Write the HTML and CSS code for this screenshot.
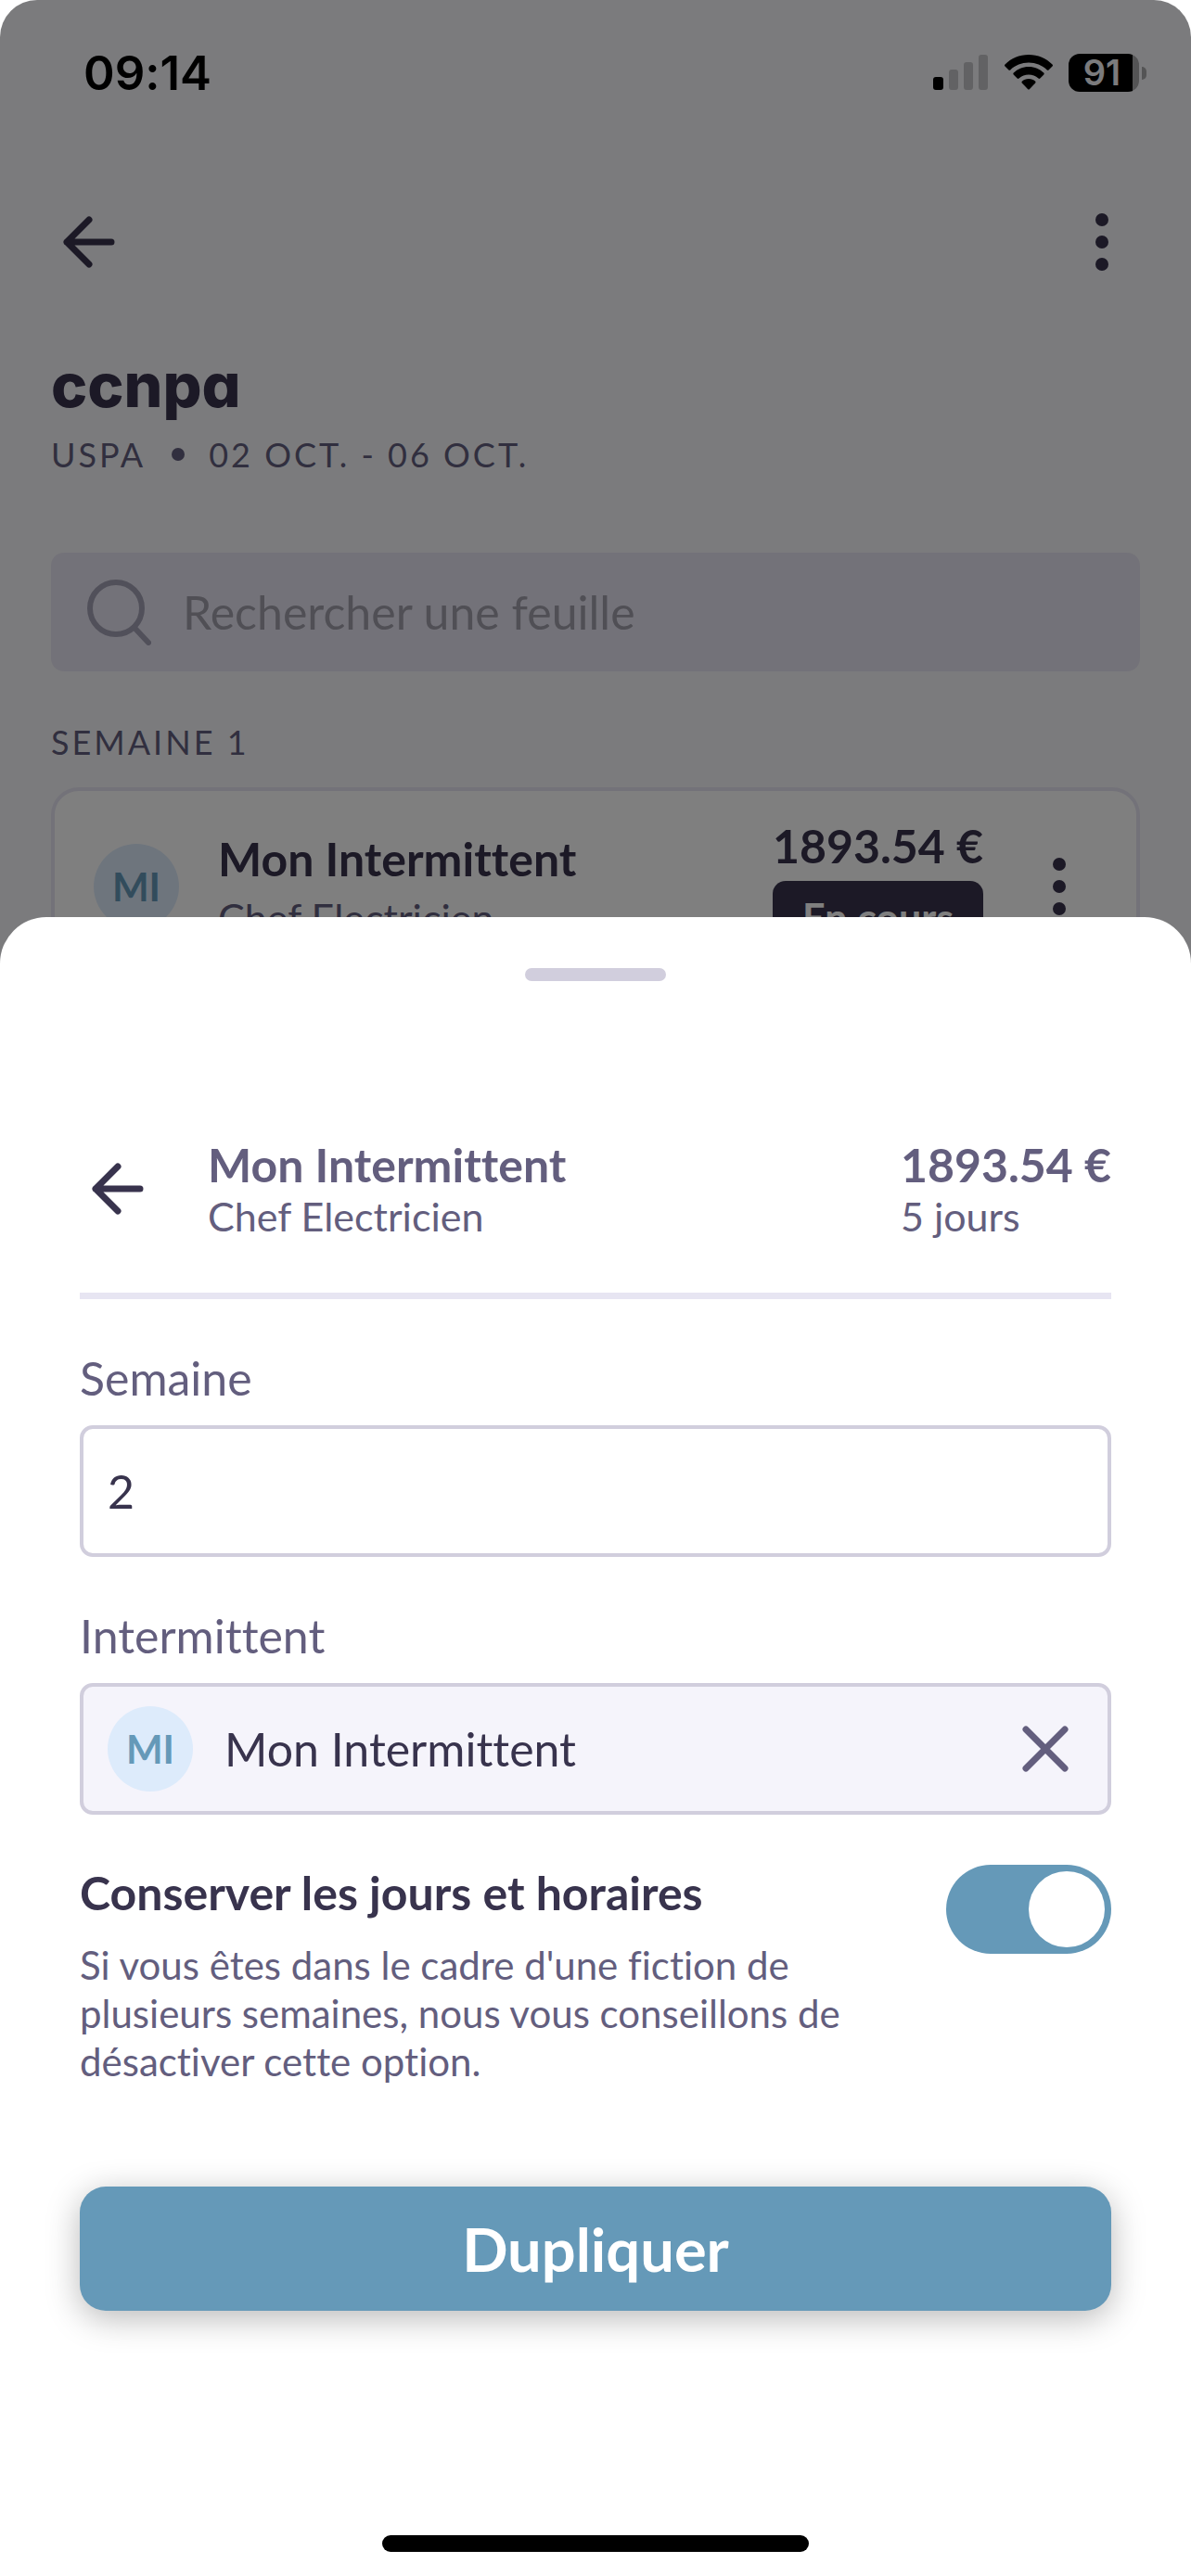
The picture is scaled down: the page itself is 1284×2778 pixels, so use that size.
FILE: index.html
```
<!doctype html>
<html lang="fr">
	<head>
		<meta charset="utf-8"/>
		<meta name="viewport" content="width=device-width, initial-scale=1" />
		<title>ccnpa</title>
		<link rel="stylesheet" href="styles.css">
	</head>
	<body>
		<div class="screen">
			<div class="status-bar">
				<span class="time">09:14</span>
				<div class="status-icons">
					<svg width="60" height="38" viewBox="0 0 60 38">
						<rect x="0" y="24" width="11" height="14" rx="3"/>
						<g opacity="0.2">
							<rect x="17" y="16" width="10" height="22" rx="3"/>
							<rect x="33" y="8" width="10" height="30" rx="3"/>
							<rect x="49" y="0" width="10" height="38" rx="3"/>
						</g>
					</svg>
					<svg width="52" height="38" viewBox="0 0 52 38">
						<path d="M26 0C36 0 45 4 51.500 10.500Q52.500 11.500 51.500 12.500L47.500 16.500Q46.700 17.200 45.800 16.400C40.500 11.300 33.500 8.500 26 8.500S11.500 11.300 6.200 16.400Q5.300 17.200 4.500 16.500L.5 12.500Q-.5 11.500.5 10.500C7 4 16 0 26 0Z"/>
						<path d="M26 13C32.500 13 38 15.500 42.300 19.600Q43.200 20.500 42.300 21.500L38.300 25.500Q37.400 26.300 36.500 25.500C33.500 22.900 30 21.500 26 21.500S18.500 22.900 15.500 25.500Q14.600 26.300 13.700 25.500L9.700 21.500Q8.800 20.500 9.700 19.600C14 15.500 19.500 13 26 13Z"/>
						<path d="M26 26C29 26 31.300 27 33.200 28.700Q34 29.600 33.200 30.500L26.800 37.200Q26 38 25.200 37.200L18.800 30.500Q18 29.600 18.800 28.700C20.700 27 23 26 26 26Z"/>
					</svg>
					<div class="battery">91</div>
				</div>
			</div>

			<div class="top-bar">
				<button class="icon-btn" aria-label="Retour">
					<svg class="stroke-icon" width="56" height="56" viewBox="0 0 56 56"><path d="M52 28H4M28 4L4 28l24 24"/></svg>
				</button>
				<button class="icon-btn" aria-label="Menu">
					<svg class="dots" width="14" height="62" viewBox="0 0 14 62"><circle cx="7" cy="7" r="7"/><circle cx="7" cy="31" r="7"/><circle cx="7" cy="55" r="7"/></svg>
				</button>
			</div>

			<div class="content">
				<h1 class="title">ccnpa</h1>
				<p class="caption"><span>USPA</span><span class="bullet"></span><span>02 OCT. - 06 OCT.</span></p>

				<label class="search">
					<svg class="search-icon" width="70" height="72" viewBox="0 0 70 72"><circle cx="32" cy="32" r="28"/><path d="M52 53l15 16"/></svg>
					<input type="text" placeholder="Rechercher une feuille" aria-label="Rechercher une feuille">
				</label>

				<h2 class="caption section">SEMAINE 1</h2>
				<div class="card">
					<span class="avatar">MI</span>
					<div class="card-person">
						<p class="name">Mon Intermittent</p>
						<p class="job">Chef Electricien</p>
					</div>
					<div class="card-amount">
						<p class="name">1893.54 €</p>
						<p class="badge">En cours</p>
					</div>
					<button class="icon-btn small" aria-label="Options">
						<svg class="dots" width="14" height="62" viewBox="0 0 14 62"><circle cx="7" cy="7" r="7"/><circle cx="7" cy="31" r="7"/><circle cx="7" cy="55" r="7"/></svg>
					</button>
				</div>
			</div>
		</div>

		<div class="overlay">
			<form class="sheet">
				<div class="handle"></div>
				<div class="sheet-header">
					<button type="button" class="icon-btn" aria-label="Retour">
						<svg class="stroke-icon" width="56" height="56" viewBox="0 0 56 56"><path d="M52 28H4M28 4L4 28l24 24"/></svg>
					</button>
					<div class="sheet-person">
						<p class="name">Mon Intermittent</p>
						<p class="job">Chef Electricien</p>
					</div>
					<div>
						<p class="name">1893.54 €</p>
						<p class="job">5 jours</p>
					</div>
				</div>

				<label class="field-label" for="semaine">Semaine</label>
				<div class="field">
					<input id="semaine" type="text" value="2">
				</div>

				<label class="field-label" for="intermittent">Intermittent</label>
				<div class="field filled">
					<span class="avatar">MI</span>
					<input id="intermittent" type="text" value="Mon Intermittent">
					<button type="button" class="icon-btn" aria-label="Effacer">
						<svg class="stroke-icon" width="50" height="50" viewBox="0 0 50 50"><path d="M4 4l42 42M46 4L4 46"/></svg>
					</button>
				</div>

				<div class="option">
					<div class="option-text">
						<label class="option-title" for="conserver">Conserver les jours et horaires</label>
						<p class="option-help">Si vous êtes dans le cadre d'une fiction de plusieurs semaines, nous vous conseillons de désactiver cette option.</p>
					</div>
					<input id="conserver" class="toggle" type="checkbox" checked>
				</div>

				<button type="button" class="submit">Dupliquer</button>
				<div class="home-indicator"></div>
			</form>
		</div>
	</body>
</html>
```

FILE: styles.css
```
* {
	box-sizing: border-box;
}

body {
	margin: 0;
	background-color: #fff;
	color: #38334d;
	font-family: Lato, "Liberation Sans", sans-serif;
	font-size: 50px;
	font-variant-ligatures: none;
}

h1, h2, p {
	margin: 0;
}

button, input {
	font: inherit;
	font-variant-ligatures: none;
	color: inherit;
	border: none;
	background: none;
	padding: 0;
	margin: 0;
}

svg {
	display: block;
}

.screen {
	height: 100vh;
	overflow: hidden;
	background-color: #f7f7fa;
	border-radius: 40px 40px 0 0;
}

.status-bar {
	display: flex;
	justify-content: space-between;
	align-items: center;
	height: 156px;
	padding: 0 48px 0 90px;
	color: #000;
	font-family: Inter, sans-serif;
	font-weight: 600;
}

.time {
	font-size: 51px;
}

.status-icons {
	display: flex;
	align-items: center;
	gap: 17px;
}

.battery {
	position: relative;
	width: 76px;
	height: 41px;
	margin-right: 8px;
	padding-right: 4px;
	border-radius: 12px;
	background: linear-gradient(to right, #000 69px, #a8a8aa 69px);
	color: #f7f7fa;
	font-size: 38px;
	line-height: 41px;
	text-align: center;
}

.battery::after {
	content: "";
	position: absolute;
	right: -8px;
	top: 14px;
	width: 5px;
	height: 14px;
	border-radius: 0 5px 5px 0;
	background-color: #a8a8aa;
}

.top-bar {
	display: flex;
	justify-content: space-between;
	padding: 45px 55px 0;
}

.icon-btn {
	display: flex;
	justify-content: center;
	align-items: center;
	flex-shrink: 0;
	width: 82px;
	height: 120px;
}

.icon-btn.small {
	width: 60px;
}

.stroke-icon {
	fill: none;
	stroke: currentColor;
	stroke-width: 7px;
	stroke-linecap: round;
	stroke-linejoin: round;
}

.dots {
	fill: currentColor;
}

.content {
	padding: 54px 55px 0;
}

.title {
	font-family: Inter, sans-serif;
	font-feature-settings: "cv11";
	font-size: 66px;
	font-weight: 800;
	line-height: 80px;
}

.caption {
	display: flex;
	align-items: center;
	margin-top: 13px;
	color: #635e7e;
	font-size: 36px;
	font-weight: 400;
	line-height: 44px;
	letter-spacing: 3px;
}

.bullet {
	width: 14px;
	height: 14px;
	margin: 0 26px 0 28px;
	border-radius: 50%;
	background-color: #635e7e;
}

.search {
	display: flex;
	align-items: center;
	gap: 34px;
	height: 128px;
	margin-top: 84px;
	padding: 0 38px;
	border-radius: 14px;
	background-color: #e7e5f2;
}

.search-icon {
	flex-shrink: 0;
	fill: none;
	stroke: #a3a1b5;
	stroke-width: 6px;
	stroke-linecap: round;
}

.search input {
	flex: 1;
	min-width: 0;
}

.search input::placeholder {
	color: #a09fab;
	opacity: 1;
}

.section {
	margin: 54px 0 27px;
}

.card {
	display: flex;
	align-items: center;
	padding: 29px 53px 28px 42px;
	border: 4px solid #e7e5f2;
	border-radius: 30px;
	background-color: #fff;
}

.avatar {
	flex-shrink: 0;
	width: 92px;
	height: 92px;
	border-radius: 50%;
	background-color: #ddebfb;
	color: #6599b8;
	font-size: 42px;
	font-weight: 700;
	line-height: 92px;
	text-align: center;
}

.name {
	font-size: 50px;
	font-weight: 700;
	line-height: 60px;
}

.job {
	color: #635e7e;
	font-size: 43px;
	line-height: 52px;
}

.card-person {
	flex: 1;
	padding-left: 42px;
}

.card-person .job {
	margin-top: 8px;
}

.card-amount {
	margin-right: 52px;
}

.badge {
	margin-top: 8px;
	padding: 14px 0;
	border-radius: 14px;
	background-color: #38334d;
	color: #fff;
	font-size: 43px;
	font-weight: 700;
	line-height: 52px;
	text-align: center;
}

/* bottom sheet over the dimmed page */
.overlay {
	position: absolute;
	inset: 0;
	display: flex;
	flex-direction: column;
	justify-content: flex-end;
	border-radius: 40px 40px 0 0;
	background-color: rgba(0, 0, 0, 0.5);
}

.sheet {
	padding: 55px 86px 26px;
	border-radius: 50px 50px 0 0;
	background-color: #fff;
}

.handle {
	width: 152px;
	height: 14px;
	margin: 0 auto;
	border-radius: 7px;
	background-color: #d1cedd;
}

.sheet-header {
	display: flex;
	align-items: center;
	margin-top: 168px;
	padding-bottom: 56px;
	border-bottom: 7px solid #e7e5f2;
}

.sheet-header .icon-btn {
	height: 112px;
}

.sheet-header .name {
	color: #635e7e;
}

.sheet-person {
	flex: 1;
	padding-left: 56px;
}

.field-label {
	display: block;
	margin: 56px 0 22px;
	color: #635e7e;
	line-height: 58px;
}

.field {
	display: flex;
	align-items: center;
	height: 142px;
	padding: 0 26px;
	border: 4px solid #d1cedd;
	border-radius: 14px;
}

.field input {
	flex: 1;
	min-width: 0;
}

.field.filled {
	background-color: #f5f4fb;
}

.filled input {
	padding-left: 34px;
}

.filled .icon-btn {
	color: #635e7e;
}

.option {
	display: flex;
	justify-content: space-between;
	align-items: flex-start;
	margin-top: 54px;
}

.option-text {
	max-width: 840px;
}

.option-title {
	display: block;
	font-weight: 700;
	line-height: 60px;
}

.option-help {
	margin-top: 22px;
	color: #635e7e;
	font-size: 42px;
	line-height: 52px;
}

.toggle {
	appearance: none;
	display: flex;
	justify-content: flex-start;
	align-items: center;
	flex-shrink: 0;
	width: 178px;
	height: 96px;
	padding: 0 7px;
	border-radius: 48px;
	background-color: #d1cedd;
}

.toggle::before {
	content: "";
	width: 82px;
	height: 82px;
	border-radius: 50%;
	background-color: #fff;
}

.toggle:checked {
	justify-content: flex-end;
	background-color: #6599b8;
}

.submit {
	display: block;
	width: 100%;
	height: 134px;
	margin-top: 109px;
	border-radius: 28px;
	background-color: #6599b8;
	box-shadow: 0 8px 36px rgba(0, 0, 0, 0.28);
	color: #fff;
	font-size: 65px;
	font-weight: 700;
}

.home-indicator {
	width: 460px;
	height: 18px;
	margin: 242px auto 0;
	border-radius: 9px;
	background-color: #000;
}
```
